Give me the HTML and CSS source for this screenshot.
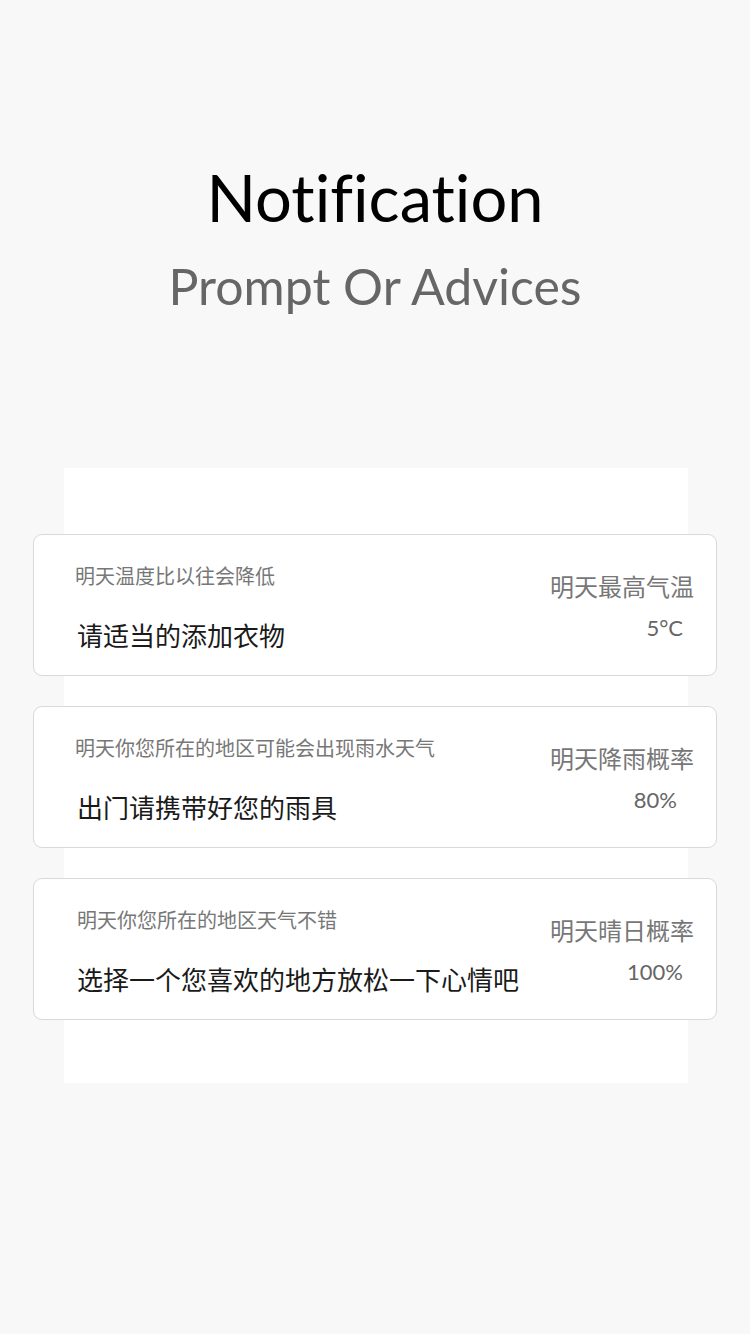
FILE: index.html
```html
<!DOCTYPE html>
<html lang="zh">
<head>
<meta charset="utf-8">
<title>Notification</title>
<link rel="stylesheet" href="styles.css">
</head>
<body>
<header class="hero">
  <h1 class="title">Notification</h1>
  <p class="subtitle">Prompt Or Advices</p>
</header>
<section class="panel">
  <div class="card">
    <div class="card-main">
      <p class="hint">明天温度比以往会降低</p>
      <p class="advice">请适当的添加衣物</p>
    </div>
    <div class="card-side">
      <p class="label">明天最高气温</p>
      <p class="value">5°C</p>
    </div>
  </div>
  <div class="card">
    <div class="card-main">
      <p class="hint">明天你您所在的地区可能会出现雨水天气</p>
      <p class="advice">出门请携带好您的雨具</p>
    </div>
    <div class="card-side">
      <p class="label">明天降雨概率</p>
      <p class="value value-narrow">80%</p>
    </div>
  </div>
  <div class="card">
    <div class="card-main">
      <p class="hint hint-shift">明天你您所在的地区天气不错</p>
      <p class="advice">选择一个您喜欢的地方放松一下心情吧</p>
    </div>
    <div class="card-side">
      <p class="label">明天晴日概率</p>
      <p class="value">100%</p>
    </div>
  </div>
</section>
</body>
</html>
```
FILE: styles.css
```css
html, body {
  margin: 0;
  padding: 0;
}
body {
  background: #f8f8f8;
  font-family: "Noto Sans CJK SC", "Noto Sans", sans-serif;
  width: 750px;
  min-height: 1334px;
}
p, h1 { margin: 0; }

.hero {
  padding-top: 157px;
  text-align: center;
  height: 468px;
  box-sizing: border-box;
}
.title {
  font-family: "Lato", "Noto Sans", sans-serif;
  font-weight: 400;
  font-size: 65px;
  line-height: 80px;
  color: #000;
  font-variant-ligatures: no-common-ligatures;
}
.subtitle {
  font-family: "Lato", "Noto Sans", sans-serif;
  font-size: 50px;
  line-height: 58px;
  margin-top: 20px;
  color: #666;
}

.panel {
  margin: 0 62px 0 64px;
  background: #fff;
  padding: 66px 0 63px;
  display: flex;
  flex-direction: column;
  gap: 30px;
}
.card {
  margin: 0 -29px 0 -31px;
  height: 142px;
  box-sizing: border-box;
  border: 1px solid #d9d9d9;
  border-radius: 9px;
  background: #fff;
  display: flex;
  justify-content: space-between;
}
.card-main {
  padding: 27px 0 0 41px;
}
.hint {
  font-size: 20px;
  line-height: 28px;
  color: #777;
  white-space: nowrap;
}
.hint-shift { padding-left: 2px; }
.advice {
  margin-top: 27px;
  margin-left: 2px;
  font-size: 26px;
  line-height: 36px;
  color: #1a1a1a;
  white-space: nowrap;
}
.card-side {
  padding: 35px 22px 0 0;
  text-align: right;
}
.label {
  font-size: 24px;
  line-height: 32px;
  color: #777;
  white-space: nowrap;
}
.value {
  margin-top: 10px;
  padding-right: 11px;
  font-family: "Lato", "Noto Sans", sans-serif;
  font-size: 22px;
  line-height: 32px;
  color: #666;
}
.value-narrow { padding-right: 17px; }
```
